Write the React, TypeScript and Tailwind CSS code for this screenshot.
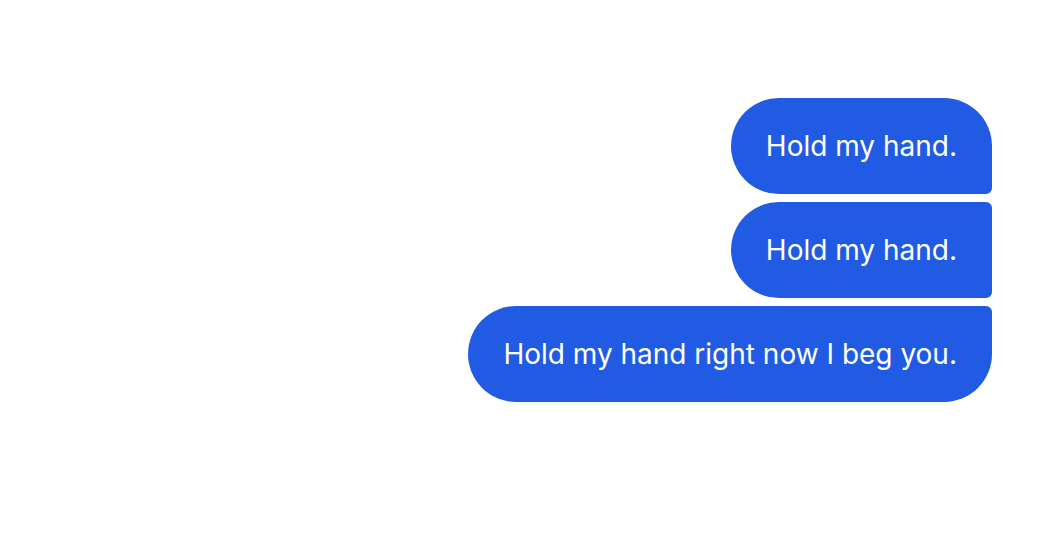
export default function App() {
  const font = { fontFamily: "Inter, 'Noto Sans', sans-serif" };
  return (
    <div className="w-[1062px] h-[554px] bg-white overflow-hidden" style={font}>
      <div className="flex flex-col items-end gap-2 pt-[98px] pr-[70px]">
        <div className="h-[96px] flex items-center px-[35px] bg-[#215be4] text-white text-[28px] rounded-tl-[48px] rounded-tr-[48px] rounded-bl-[48px] rounded-br-[6px]">
          Hold my hand.
        </div>
        <div className="h-[96px] flex items-center px-[35px] bg-[#215be4] text-white text-[28px] rounded-tl-[48px] rounded-tr-[6px] rounded-bl-[48px] rounded-br-[6px]">
          Hold my hand.
        </div>
        <div className="h-[96px] flex items-center px-[35px] bg-[#215be4] text-white text-[28px] rounded-tl-[48px] rounded-tr-[6px] rounded-bl-[48px] rounded-br-[48px]">
          Hold my hand right now I beg you.
        </div>
      </div>
    </div>
  );
}
